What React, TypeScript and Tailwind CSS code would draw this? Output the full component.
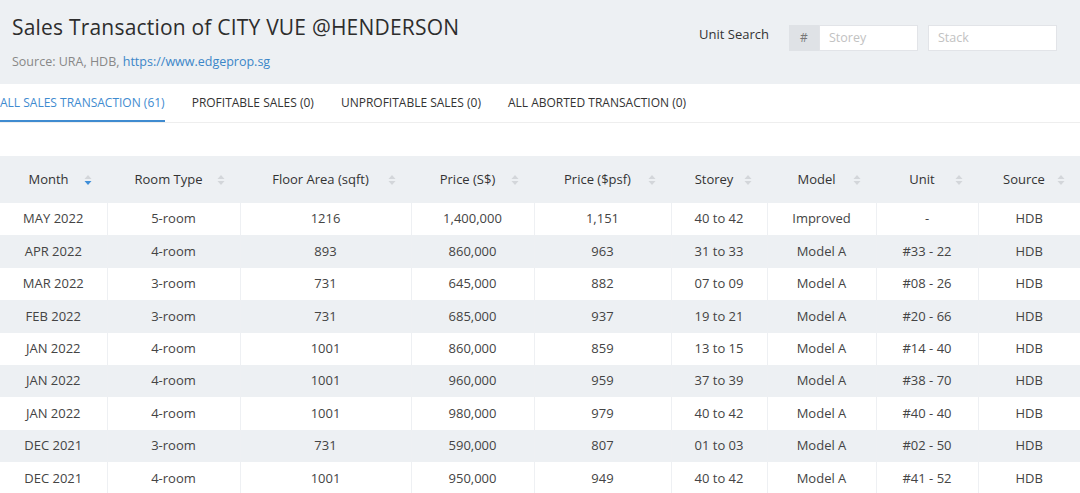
import { ReactNode } from 'react'

type Row = {
  month: string
  room: string
  area: string
  price: string
  psf: string
  storey: string
  model: string
  unit: string
  source: string
}

const rows: Row[] = [
  { month: 'MAY 2022', room: '5-room', area: '1216', price: '1,400,000', psf: '1,151', storey: '40 to 42', model: 'Improved', unit: '-', source: 'HDB' },
  { month: 'APR 2022', room: '4-room', area: '893', price: '860,000', psf: '963', storey: '31 to 33', model: 'Model A', unit: '#33 - 22', source: 'HDB' },
  { month: 'MAR 2022', room: '3-room', area: '731', price: '645,000', psf: '882', storey: '07 to 09', model: 'Model A', unit: '#08 - 26', source: 'HDB' },
  { month: 'FEB 2022', room: '3-room', area: '731', price: '685,000', psf: '937', storey: '19 to 21', model: 'Model A', unit: '#20 - 66', source: 'HDB' },
  { month: 'JAN 2022', room: '4-room', area: '1001', price: '860,000', psf: '859', storey: '13 to 15', model: 'Model A', unit: '#14 - 40', source: 'HDB' },
  { month: 'JAN 2022', room: '4-room', area: '1001', price: '960,000', psf: '959', storey: '37 to 39', model: 'Model A', unit: '#38 - 70', source: 'HDB' },
  { month: 'JAN 2022', room: '4-room', area: '1001', price: '980,000', psf: '979', storey: '40 to 42', model: 'Model A', unit: '#40 - 40', source: 'HDB' },
  { month: 'DEC 2021', room: '3-room', area: '731', price: '590,000', psf: '807', storey: '01 to 03', model: 'Model A', unit: '#02 - 50', source: 'HDB' },
  { month: 'DEC 2021', room: '4-room', area: '1001', price: '950,000', psf: '949', storey: '40 to 42', model: 'Model A', unit: '#41 - 52', source: 'HDB' },
]

const columns: { label: string; key: keyof Row; width: string }[] = [
  { label: 'Month', key: 'month', width: 'w-[107px]' },
  { label: 'Room Type', key: 'room', width: 'w-[133px]' },
  { label: 'Floor Area (sqft)', key: 'area', width: 'w-[171px]' },
  { label: 'Price (S$)', key: 'price', width: 'w-[123px]' },
  { label: 'Price ($psf)', key: 'psf', width: 'w-[137px]' },
  { label: 'Storey', key: 'storey', width: 'w-[96px]' },
  { label: 'Model', key: 'model', width: 'w-[109px]' },
  { label: 'Unit', key: 'unit', width: 'w-[102px]' },
  { label: 'Source', key: 'source', width: 'w-[102px]' },
]

const tabs = [
  'ALL SALES TRANSACTION (61)',
  'PROFITABLE SALES (0)',
  'UNPROFITABLE SALES (0)',
  'ALL ABORTED TRANSACTION (0)',
]

function SortIcon({ active }: { active?: boolean }) {
  return (
    <svg width="8" height="12" viewBox="0 0 8 12" className="block">
      <path d="M4 1 L7.5 5 L0.5 5 Z" fill="#d3d6da" />
      <path d="M4 11 L7.5 7 L0.5 7 Z" fill={active ? '#3f8fd8' : '#d3d6da'} />
    </svg>
  )
}

function HeaderCell({ children, active, width }: { children: ReactNode; active?: boolean; width: string }) {
  return (
    <th className={`${width} relative h-[47px] pr-[10px] text-center font-normal text-[13px] text-[#333]`}>
      {children}
      <span className="absolute right-[15px] top-[18px]">
        <SortIcon active={active} />
      </span>
    </th>
  )
}

export default function App() {
  return (
    <div
      className="w-[1080px] h-[493px] overflow-hidden bg-white"
      style={{ fontFamily: '"Open Sans", "Liberation Sans", sans-serif' }}
    >
      <div className="h-[84px] bg-[#edf0f3] flex justify-between pl-[12px] pr-[23px]">
        <div className="pt-[13px]">
          <h1 className="text-[21px] leading-[28px] text-[#2d2d2d] tracking-[0.2px]">
            Sales Transaction of CITY VUE @HENDERSON
          </h1>
          <p className="mt-[12px] text-[12.5px] leading-[18px] text-[#888]">
            Source: URA, HDB, <span className="text-[#3b86c8]">https://www.edgeprop.sg</span>
          </p>
        </div>
        <div className="flex items-start pt-[25px]">
          <span className="text-[13px] leading-[18px] text-[#333]">Unit Search</span>
          <div className="ml-[20px] flex h-[26px]">
            <span className="w-[30px] bg-[#dfe2e6] flex items-center justify-center text-[12px] text-[#777]">#</span>
            <div className="w-[99px] bg-white border border-[#e2e4e8] px-[9px] flex items-center text-[12.5px] text-[#c2c2c2]">
              Storey
            </div>
          </div>
          <div className="ml-[10px] w-[129px] h-[26px] bg-white border border-[#e2e4e8] px-[9px] flex items-center text-[12.5px] text-[#c2c2c2]">
            Stack
          </div>
        </div>
      </div>

      <div className="h-[39px] border-b border-[#eeeeee] flex gap-[27px]">
        {tabs.map((t, i) => (
          <div
            key={t}
            className={`flex items-center text-[12px] ${
              i === 0 ? 'text-[#3f8bd0] border-b-2 border-[#3f8bd0] pt-[2px]' : 'text-[#333]'
            }`}
          >
            {t}
          </div>
        ))}
      </div>

      <div className="h-[33px]" />

      <table className="w-[1080px] table-fixed border-collapse">
        <thead>
          <tr className="bg-[#edf0f3]">
            {columns.map((c, i) => (
              <HeaderCell key={c.key} width={c.width} active={i === 0}>
                {c.label}
              </HeaderCell>
            ))}
          </tr>
        </thead>
        <tbody>
          {rows.map((r, ri) => (
            <tr key={ri} className={ri % 2 === 0 ? 'bg-white' : 'bg-[#edf0f3]'}>
              {columns.map((c, ci) => (
                <td
                  key={c.key}
                  className={`h-[32.4px] p-0 text-center text-[13px] text-[#444] ${
                    ci > 0 ? 'border-l border-[#eef0f3]' : ''
                  }`}
                >
                  {r[c.key]}
                </td>
              ))}
            </tr>
          ))}
        </tbody>
      </table>
    </div>
  )
}
